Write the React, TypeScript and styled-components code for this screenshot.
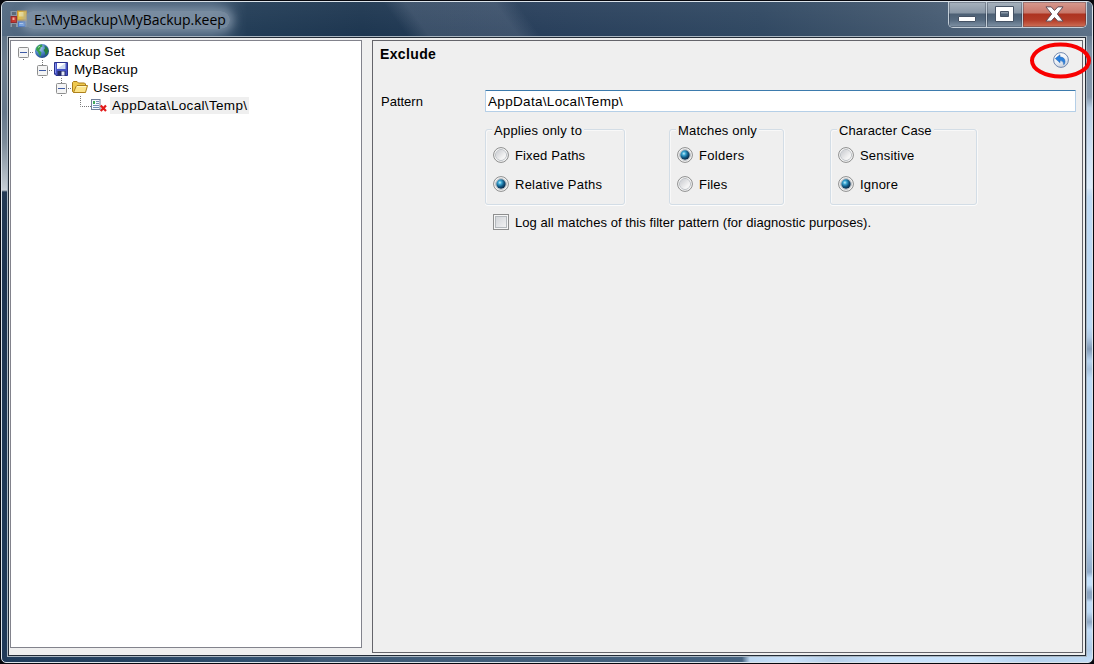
import React from "react";
import styled, { createGlobalStyle, css } from "styled-components";

const GlobalStyle = createGlobalStyle`
  *, *::before, *::after { box-sizing: border-box; }
  html, body { margin: 0; padding: 0; background: #0a0a10; }
  body { font-family: "Liberation Sans", Arial, sans-serif; font-size: 13px; color: #000; overflow: hidden; }
`;

const Desktop = styled.div`
  position: relative;
  width: 1094px;
  height: 664px;
  padding: 1px;
  background: #07080e;
`;

const WindowFrame = styled.div`
  display: flex;
  flex-direction: column;
  width: 100%;
  height: 100%;
  padding: 0 5px 5px;
  border: 1px solid #dbe3ea;
  border-radius: 6px 6px 5px 5px;
  background:
    linear-gradient(180deg, #51677d 0, #6d7e8f 60px, #65778a 110px, #7c8b99 140px, #c3cbd2 186px, #cbd1d7 188px, #243a54 190px, #1d3450 270px, #203854 400px, #203a59 100%) left 0 top 0 / 5px 100% no-repeat,
    linear-gradient(180deg, #40566c 0, #7f92a6 50px, #8598ad 95px, #b9cfe5 106px, #cfe2f5 150px, #dcecfb 186px, #cfe2f5 188px, #bfdaf4 195px, #bddaf5 325px, #b1cbe6 335px, #849bb7 347px, #b8d4ef 359px, #a7c1dc 367px, #bddaf5 376px, #bddaf5 430px, #b3cfea 535px, #90aac8 570px, #c3e0fb 576px, #c3e0fb 583px, #8ca5c2 590px, #8ca5c2 596px, #c1dcf7 600px, #bddaf5 610px, #8fa7c3 620px, #c1dcf7 628px, #b0cbe7 648px, #c1dcf7 658px) right 0 top 0 / 5px 100% no-repeat,
    linear-gradient(90deg, #203c5b 0, #25415f 120px, #31506f 250px, #324e6b 290px, #3f5a76 320px, #466380 740px, #bdd8f2 748px, #c9e1fa 790px, #b7cfe9 830px, #c7e1fb 880px, #cae4fd 970px, #b6d2ee 1030px, #bfdaf4 100%) left 0 bottom 0 / 100% 5px no-repeat,
    #203b57;
`;

const TitleBar = styled.header`
  display: flex;
  justify-content: space-between;
  flex: 0 0 34px;
  margin: 0 -5px;
  padding-left: 8px;
  border-radius: 5px 5px 0 0;
  background:
    linear-gradient(180deg, rgba(255, 255, 255, 0.05), transparent),
    linear-gradient(54deg, transparent 328px, rgba(116, 130, 152, 0.3) 346px, rgba(116, 130, 152, 0.3) 418px, transparent 436px) 0 0 / 560px 100% no-repeat,
    linear-gradient(90deg, #536a82 0, #475f78 40px, #425b75 210px, #223c56 245px, #1d3650 360px, #283f5b 540px, #304862 760px, #41566d 900px, #5b7087 100%);
`;

const Caption = styled.div`
  display: flex;
  align-items: center;
  gap: 6px;
  height: 34px;
`;

const CaptionText = styled.h1`
  margin: 2px 0 0 -10px;
  padding: 0 10px;
  width: 206px;
  border-radius: 12px;
  background: rgba(150, 166, 184, 0.62);
  box-shadow: 0 0 9px 4px rgba(150, 166, 184, 0.62);
  font: 400 14px/18px "Open Sans", "Noto Sans", sans-serif;
  letter-spacing: -0.02px;
  white-space: nowrap;
`;

const WindowControls = styled.div`
  display: flex;
  align-self: flex-start;
  margin-right: 5px;
  height: 26px;
  border: 1px solid #c3ced8;
  border-top: 0;
  border-radius: 0 0 5px 5px;
  overflow: hidden;
`;

const ControlButton = styled.button<{ $width: number; $close?: boolean }>`
  display: flex;
  align-items: center;
  justify-content: center;
  width: ${(p) => p.$width}px;
  height: 25px;
  margin: 0;
  padding: 0 1px 2px 0;
  border: 0;
  border-right: 1px solid #c3ced8;
  box-shadow: inset 0 0 0 1px rgba(30, 40, 55, 0.3);
  background: ${(p) =>
    p.$close
      ? "linear-gradient(180deg, #d79a8f 0, #c8776a 11px, #ad3320 12px, #b33c28 18px, #cf7057 25px)"
      : "linear-gradient(180deg, #a8b3be 0, #8896a5 11px, #4d6074 12px, #566a7f 18px, #8194a7 25px)"};
  &:last-child { border-right: 0; }
`;

const Client = styled.main`
  display: flex;
  flex: 1;
  gap: 10px;
  margin: 1px;
  padding: 2px 2px 2px 1px;
  border: 1px solid #232c37;
  outline: 1px solid #aab6c1;
  background: #efefef;
`;

const TreePane = styled.section`
  width: 352px;
  height: 608px;
  padding-top: 2px;
  border: 1px solid #82838c;
  background: #fff;
`;

const TreeRow = styled.div<{ $level: number }>`
  display: flex;
  align-items: center;
  height: 18px;
  padding-left: ${(p) => 7 + p.$level * 19}px;
  svg { margin-top: -2px; }
`;

const Branch = styled.svg`
  flex: none;
  width: 16px;
  height: 18px;
  overflow: visible;
`;

const Icon = styled.svg`
  display: block;
  flex: none;
  overflow: visible;
`;

const TreeLabel = styled.span<{ $selected?: boolean; $spacing: number }>`
  margin-left: 3px;
  padding: 0 2px;
  font-size: 13.5px;
  line-height: 18px;
  white-space: nowrap;
  letter-spacing: ${(p) => p.$spacing}px;
  ${(p) => p.$selected && css`background: linear-gradient(#efefef, #efefef) 0 -1px no-repeat;`}
`;

const DetailPane = styled.section`
  flex: none;
  width: 711px;
  height: 613px;
  padding: 6px 6px 0 7px;
  border: 1px solid #64646a;
`;

const PaneHeader = styled.div`
  display: flex;
  justify-content: space-between;
  height: 43px;
`;

const Heading = styled.h2`
  margin: 0;
  font-size: 14px;
  line-height: 15px;
  letter-spacing: 0.36px;
`;

const UndoButton = styled.button`
  width: 18px;
  height: 18px;
  margin: 4px 6px 0 0;
  padding: 0;
  border: 0;
  background: none;
`;

const PatternRow = styled.label`
  display: flex;
  align-items: center;
  height: 22px;
`;

const Label = styled.span<{ $spacing?: number }>`
  line-height: 16px;
  white-space: nowrap;
  letter-spacing: ${(p) => p.$spacing ?? 0.2}px;
`;

const FieldName = styled(Label)`
  width: 105px;
  padding: 2px 0 0 1px;
`;

const PatternInput = styled.input`
  width: 591px;
  height: 22px;
  margin: 0;
  padding: 0 2px;
  border: 1px solid #b5cfe7;
  border-top-color: #3d7bad;
  border-radius: 1px;
  outline: 0;
  background: #fff;
  font: 13.5px "Liberation Sans", Arial, sans-serif;
  letter-spacing: 0.32px;
`;

const Options = styled.div`
  display: flex;
  margin: 17px 0 0 105px;
`;

const GroupBox = styled.div<{ $width: number; $gap: number }>`
  display: flex;
  flex-direction: column;
  width: ${(p) => p.$width}px;
  height: 76px;
  margin-right: ${(p) => p.$gap}px;
  padding-left: 7px;
  border: 1px solid #d3dde6;
  border-radius: 3px;
  box-shadow: 0 1px 0 #fcfcfc, 1px 0 0 #f9f9f9, inset 1px 1px 0 #f8f8f8;
`;

const Legend = styled.div`
  align-self: flex-start;
  height: 16px;
  margin: -7px 0 8px -1px;
  padding: 0 2px;
  background: #efefef;
`;

const Option = styled.label`
  display: flex;
  align-items: center;
  gap: 6px;
  height: 16px;
  margin-bottom: 13px;
  ${Label} { padding-top: 1px; line-height: 17px; }
`;

const LogOption = styled(Option)`
  margin: 9px 0 0 113px;
  ${Label} { padding-top: 0; }
`;

const CheckBox = styled.span`
  width: 16px;
  height: 16px;
  border: 1px solid #8e8f8f;
  box-shadow: inset 0 0 0 1px #f6f6f6, inset 0 0 0 2px #b4b9bd;
  background: linear-gradient(135deg, #cdd0d5, #f6f6f6);
`;

const Annotation = styled.svg`
  position: absolute;
  left: 1028px;
  top: 41px;
  pointer-events: none;
`;

function Expander({ first }: { first?: boolean }) {
  return (
    <Branch viewBox="0 0 16 18">
      {!first && <path d="M5.5 0V5" stroke="#777" strokeDasharray="1 1" />}
      <rect x="0.5" y="5.5" width="10" height="10" rx="1" fill="#f4f4f4" stroke="#8e8f8f" />
      <path d="M2 10.5H9" stroke="#3f5ba5" />
      <path d="M12 10.5H15" stroke="#777" strokeDasharray="1 1" />
      <path d="M5.5 17V18" stroke="#777" />
    </Branch>
  );
}

function Elbow() {
  return (
    <Branch viewBox="0 0 16 18">
      <path d="M5.5 0V10.5H16" fill="none" stroke="#777" strokeDasharray="1 1" />
    </Branch>
  );
}

function AppIcon() {
  return (
    <Icon width="18" height="18" viewBox="0 0 18 18">
      <rect x="0.500" y="1" width="16" height="16" fill="#8b97a6" />
      <path d="M2 2h4v3H2zM2 14h4v3H2z" fill="#5d6a7a" />
      <rect x="1" y="6.500" width="5.500" height="6" fill="#c8372c" stroke="#93282a" />
      <rect x="2.500" y="7.500" width="2" height="2.500" fill="#f4aa98" />
      <rect x="7.500" y="1" width="9" height="9" fill="#f8c62f" stroke="#c9922a" />
      <rect x="9" y="2" width="4.500" height="4.500" fill="#ffe98e" />
      <rect x="8.500" y="12" width="6.500" height="4.500" fill="#6ea2ee" stroke="#3e6fc4" />
      <path d="M9.500 13.500h3.500" stroke="#b9d5ff" />
    </Icon>
  );
}

function GlobeIcon() {
  return (
    <Icon width="16" height="18" viewBox="0 0 16 18">
      <defs>
        <radialGradient id="sea" cx="0.35" cy="0.3" r="0.8">
          <stop offset="0" stopColor="#b4d0f0" />
          <stop offset="0.5" stopColor="#4c82c6" />
          <stop offset="1" stopColor="#123a78" />
        </radialGradient>
      </defs>
      <circle cx="8" cy="9" r="7" fill="url(#sea)" />
      <path d="M2.500 5.500Q5 2 8 2.600L8.500 4.500L6.500 5.500L6.500 7L5 8L7.500 10.500L6.500 14.500L5 12.500L4 10L2 8Z" fill="#35a04a" />
      <path d="M10.500 3.500L13.500 6L14.500 9L13 12L11.500 13.500L11 10.500L9.500 8L11 6.500Z" fill="#267f40" />
      <path d="M4 5.500L6 4.200" stroke="#a6e0a0" />
    </Icon>
  );
}

function DiskIcon() {
  return (
    <Icon width="16" height="18" viewBox="0 0 16 18">
      <path d="M1.500 2.500H14.500V15.500H3L1.500 14Z" fill="#4653c5" stroke="#2a318c" />
      <path d="M2.500 3.500V13" stroke="#8796ec" />
      <rect x="4" y="3" width="8.500" height="6" fill="#cfdcf2" />
      <path d="M4 3H12.500L4 9Z" fill="#fff" />
      <rect x="4.500" y="11" width="8" height="4.500" fill="#242c68" />
      <rect x="8.500" y="11.500" width="3" height="4" fill="#e6eaf5" />
    </Icon>
  );
}

function FolderIcon() {
  return (
    <Icon width="16" height="18" viewBox="0 0 16 18">
      <path d="M0.500 13.500V4.500L1.500 3.500H5L6.500 5H12.500L13.500 6V14.500H1.500Z" fill="#efc94e" stroke="#aa7c19" />
      <path d="M1.500 14.500L4 8.500L5 7.500H15.500L13.800 13.500L12.800 14.500Z" fill="#fbe388" stroke="#ad801c" />
      <path d="M5 8.600H14" stroke="#fff8c8" />
    </Icon>
  );
}

function ExcludeIcon() {
  return (
    <Icon width="16" height="18" viewBox="0 0 16 18">
      <rect x="0.500" y="3.500" width="8.500" height="10" fill="#f7faff" stroke="#72809a" />
      <rect x="2" y="5" width="2" height="3" fill="#42a95a" />
      <path d="M5 5.500H8M5 7.500H8M2 9.500H8M2 11.500H8" stroke="#7390b5" />
      <path d="M9.700 9.500L15 15M15 9.500L9.700 15" stroke="#e21b1b" strokeWidth="2.200" />
    </Icon>
  );
}

function UndoIcon() {
  return (
    <Icon width="18" height="18" viewBox="0 0 18 18">
      <defs>
        <linearGradient id="undoFace" x1="0" y1="0" x2="0.4" y2="1">
          <stop offset="0" stopColor="#fff" />
          <stop offset="0.6" stopColor="#eff2f7" />
          <stop offset="1" stopColor="#cbd4e1" />
        </linearGradient>
      </defs>
      <circle cx="9" cy="9" r="7.400" fill="url(#undoFace)" stroke="#7187ad" />
      <path d="M3.300 7.600L8 3.700V6Q13 6.200 13 10.500Q13 12.300 11.800 13.700Q11.800 9.600 8 9.500V11.700Z" fill="#2b80dc" stroke="#1c61b5" strokeWidth="0.500" />
    </Icon>
  );
}

function RadioMark({ checked }: { checked?: boolean }) {
  const fill = checked ? "url(#radioOn)" : "url(#radioOff)";
  return (
    <Icon width="16" height="16" viewBox="0 0 16 16">
      <defs>
        <radialGradient id="radioOn" cx="0.38" cy="0.35" r="0.65">
          <stop offset="0" stopColor="#c5f0fc" />
          <stop offset="0.3" stopColor="#3aa5d2" />
          <stop offset="0.65" stopColor="#125a85" />
          <stop offset="1" stopColor="#0a2b4b" />
        </radialGradient>
        <linearGradient id="radioOff" x1="0" y1="0" x2="1" y2="1">
          <stop offset="0" stopColor="#c8cacf" />
          <stop offset="0.7" stopColor="#f3f3f3" />
          <stop offset="1" stopColor="#f8f8f8" />
        </linearGradient>
      </defs>
      <circle cx="8" cy="8" r="7.400" fill="#f7f7f7" stroke="#8b8c8c" />
      <circle cx="8" cy="8" r="5.400" fill="#e7e9eb" stroke="#b5babf" />
      <circle cx="8" cy="8" r={checked ? 4.7 : 5} fill={fill} />
    </Icon>
  );
}

type Choice = { text: string; spacing?: number; checked?: boolean };

function Group({ title, spacing, width, gap, options }: { title: string; spacing?: number; width: number; gap: number; options: Choice[] }) {
  return (
    <GroupBox $width={width} $gap={gap}>
      <Legend><Label $spacing={spacing}>{title}</Label></Legend>
      {options.map((o) => (
        <Option key={o.text}>
          <RadioMark checked={o.checked} />
          <Label $spacing={o.spacing}>{o.text}</Label>
        </Option>
      ))}
    </GroupBox>
  );
}

export default function App() {
  return (
    <>
      <GlobalStyle />
      <Desktop>
        <WindowFrame>
          <TitleBar>
            <Caption>
              <AppIcon />
              <CaptionText>E:\MyBackup\MyBackup.keep</CaptionText>
            </Caption>
            <WindowControls>
              <ControlButton $width={38} aria-label="Minimize">
                <Icon width="18" height="6" viewBox="0 0 18 6" style={{ marginTop: 11 }}>
                  <rect x="0.500" y="0.500" width="17" height="5" rx="0.500" fill="#fff" stroke="#465365" />
                </Icon>
              </ControlButton>
              <ControlButton $width={36} aria-label="Maximize">
                <Icon width="19" height="16" viewBox="0 0 19 16">
                  <path fillRule="evenodd" d="M0.500 0.500H18.500V15.500H0.500ZM5.500 5.500V10.500H13.500V5.500Z" fill="#fff" stroke="#465365" />
                </Icon>
              </ControlButton>
              <ControlButton $width={63} $close aria-label="Close">
                <Icon width="19" height="16" viewBox="0 0 20 16">
                  <path d="M1 0.500H6.500L10 4.300L13.500 0.500H19L13 8L19 15.500H13.500L10 11.700L6.500 15.500H1L7 8Z" fill="#fff" stroke="#5b4a55" />
                </Icon>
              </ControlButton>
            </WindowControls>
          </TitleBar>
          <Client>
            <TreePane>
              <TreeRow $level={0}><Expander first /><GlobeIcon /><TreeLabel $spacing={0.08}>Backup Set</TreeLabel></TreeRow>
              <TreeRow $level={1}><Expander /><DiskIcon /><TreeLabel $spacing={0.1}>MyBackup</TreeLabel></TreeRow>
              <TreeRow $level={2}><Expander /><FolderIcon /><TreeLabel $spacing={0.15}>Users</TreeLabel></TreeRow>
              <TreeRow $level={3}><Elbow /><ExcludeIcon /><TreeLabel $selected $spacing={0.33}>AppData\Local\Temp\</TreeLabel></TreeRow>
            </TreePane>
            <DetailPane>
              <PaneHeader>
                <Heading>Exclude</Heading>
                <UndoButton aria-label="Undo"><UndoIcon /></UndoButton>
              </PaneHeader>
              <PatternRow>
                <FieldName $spacing={0}>Pattern</FieldName>
                <PatternInput defaultValue="AppData\Local\Temp\" />
              </PatternRow>
              <Options>
                <Group title="Applies only to" spacing={0.24} width={140} gap={44} options={[{ text: "Fixed Paths", spacing: 0.14 }, { text: "Relative Paths", spacing: 0.25, checked: true }]} />
                <Group title="Matches only" width={115} gap={46} options={[{ text: "Folders", spacing: 0.3, checked: true }, { text: "Files" }]} />
                <Group title="Character Case" spacing={0.12} width={147} gap={0} options={[{ text: "Sensitive" }, { text: "Ignore", checked: true }]} />
              </Options>
              <LogOption>
                <CheckBox />
                <Label $spacing={0.065}>Log all matches of this filter pattern (for diagnostic purposes).</Label>
              </LogOption>
            </DetailPane>
          </Client>
        </WindowFrame>
        <Annotation width="66" height="40" viewBox="0 0 66 40">
          <ellipse cx="32.500" cy="19.500" rx="28.500" ry="16" fill="none" stroke="#f80000" strokeWidth="4" />
        </Annotation>
      </Desktop>
    </>
  );
}
